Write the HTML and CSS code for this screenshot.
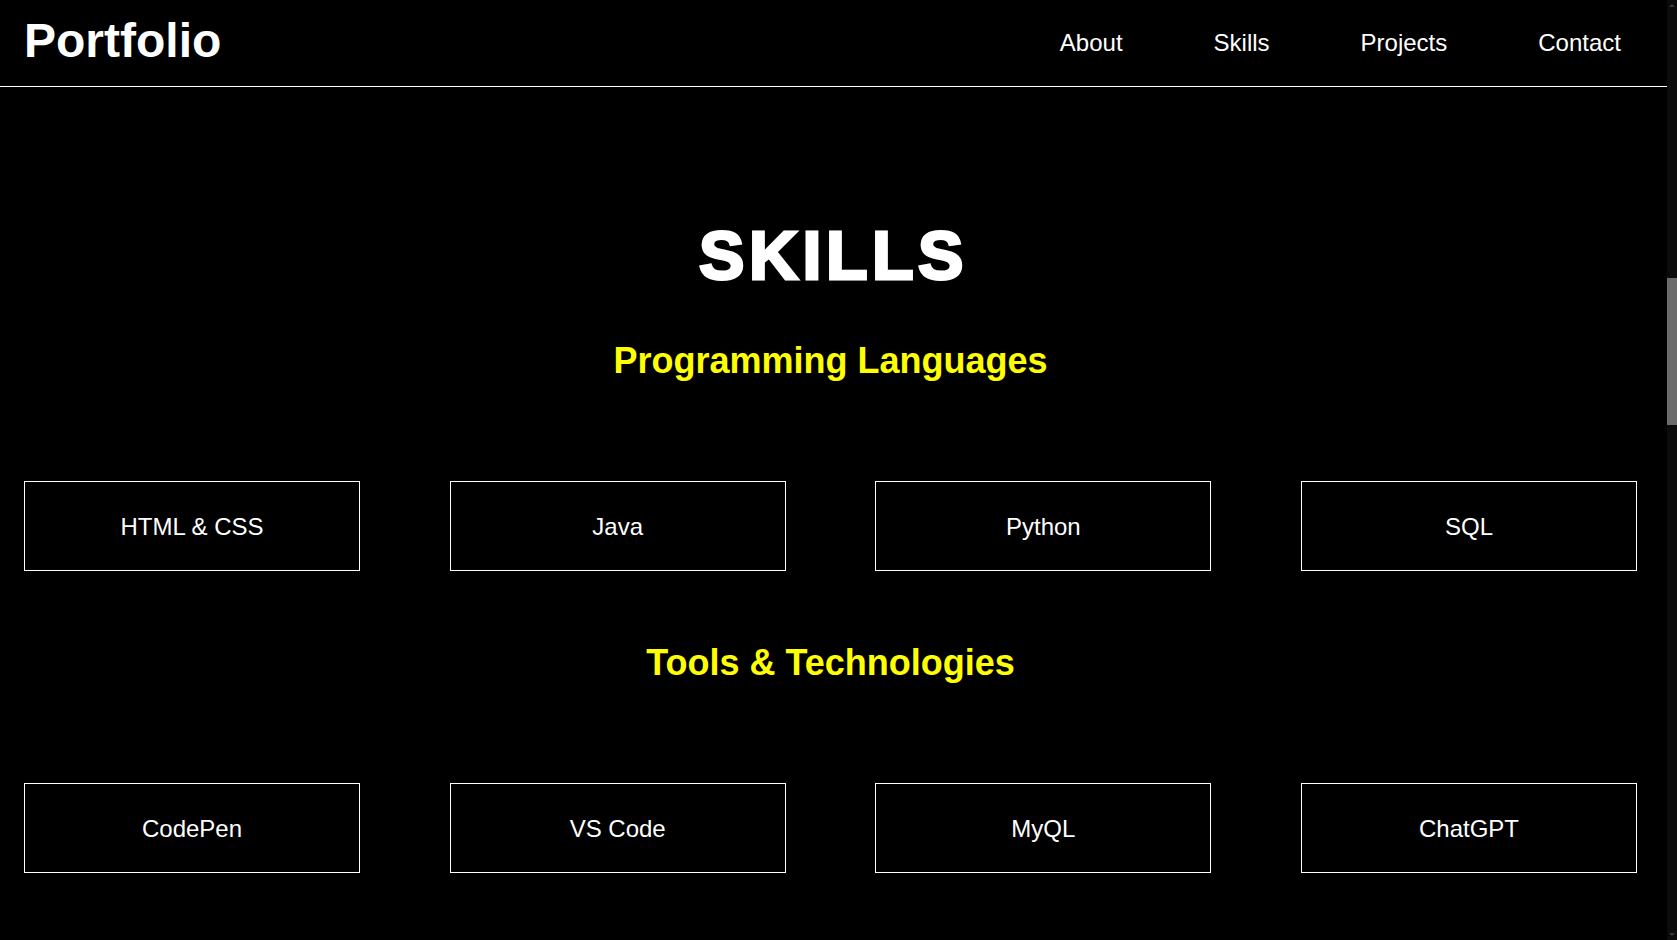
FILE: index.html
```html
<!DOCTYPE html>
<html lang="en">
<head>
<meta charset="utf-8">
<title>Portfolio</title>
<link rel="stylesheet" href="styles.css">
</head>
<body>
<div class="page">
  <header class="site-header">
    <h1 class="logo">Portfolio</h1>
    <nav class="nav">
      <a href="#about">About</a>
      <a href="#skills">Skills</a>
      <a href="#projects">Projects</a>
      <a href="#contact">Contact</a>
    </nav>
  </header>
  <section class="skills" id="skills">
    <h2 class="skills-title">SKILLS</h2>
    <h3 class="group-title">Programming Languages</h3>
    <div class="card-grid">
      <div class="card">HTML &amp; CSS</div>
      <div class="card">Java</div>
      <div class="card">Python</div>
      <div class="card">SQL</div>
    </div>
    <h3 class="group-title">Tools &amp; Technologies</h3>
    <div class="card-grid">
      <div class="card">CodePen</div>
      <div class="card">VS Code</div>
      <div class="card">MyQL</div>
      <div class="card">ChatGPT</div>
    </div>
  </section>
</div>
<div class="scrollbar" aria-hidden="true">
  <div class="arrow arrow-up"></div>
  <div class="thumb"></div>
  <div class="track-rest"></div>
  <div class="arrow arrow-down"></div>
</div>
</body>
</html>
```

FILE: styles.css
```css
* { box-sizing: border-box; }

html, body {
  margin: 0;
  padding: 0;
  height: 100%;
}

body {
  background: #000;
  color: #fff;
  font-family: "Liberation Sans", Arial, sans-serif;
  display: flex;
  overflow: hidden;
}

.page {
  flex: 1;
  min-width: 0;
  height: 100vh;
  overflow: hidden;
}

.site-header {
  height: 87px;
  border-bottom: 1px solid #fff;
  display: flex;
  justify-content: space-between;
  align-items: flex-start;
  padding: 0 46px 0 24px;
}

.logo {
  margin: 13px 0 0;
  font-size: 48px;
  line-height: 56px;
  font-weight: bold;
}

.nav {
  display: flex;
  gap: 91px;
  margin-top: 29px;
}

.nav a {
  color: #fff;
  text-decoration: none;
  font-size: 24px;
  line-height: 28px;
}

.skills {
  padding: 128px 30px 0 24px;
  text-align: center;
}

.skills-title {
  margin: 0 0 45px;
  font-size: 68px;
  line-height: 80px;
  font-weight: bold;
  letter-spacing: 4.5px;
  text-indent: 6px;
  -webkit-text-stroke: 3px #fff;
}

.group-title {
  margin: 0 0 99px;
  font-size: 36px;
  line-height: 42px;
  font-weight: bold;
  color: #ffff00;
}

.card-grid {
  display: grid;
  grid-template-columns: repeat(4, 336px);
  justify-content: space-between;
  margin-bottom: 71px;
}

.card {
  border: 1px solid #fff;
  padding: 31px 10px 29px;
  font-size: 24px;
  line-height: 28px;
  text-align: center;
}

.scrollbar {
  width: 10px;
  flex: none;
  height: 100vh;
  background: #0b0b0b;
  display: flex;
  flex-direction: column;
  align-items: center;
}

.arrow {
  width: 0;
  height: 0;
  border-left: 3px solid transparent;
  border-right: 3px solid transparent;
  flex: none;
}

.arrow-up {
  margin-top: 4px;
  border-bottom: 3px solid #3a3a3a;
}

.arrow-down {
  margin-bottom: 4px;
  border-top: 3px solid #3a3a3a;
}

.thumb {
  width: 10px;
  height: 147px;
  margin-top: 271px;
  background: #6b6b6b;
  flex: none;
}

.track-rest {
  flex: 1;
}
```
